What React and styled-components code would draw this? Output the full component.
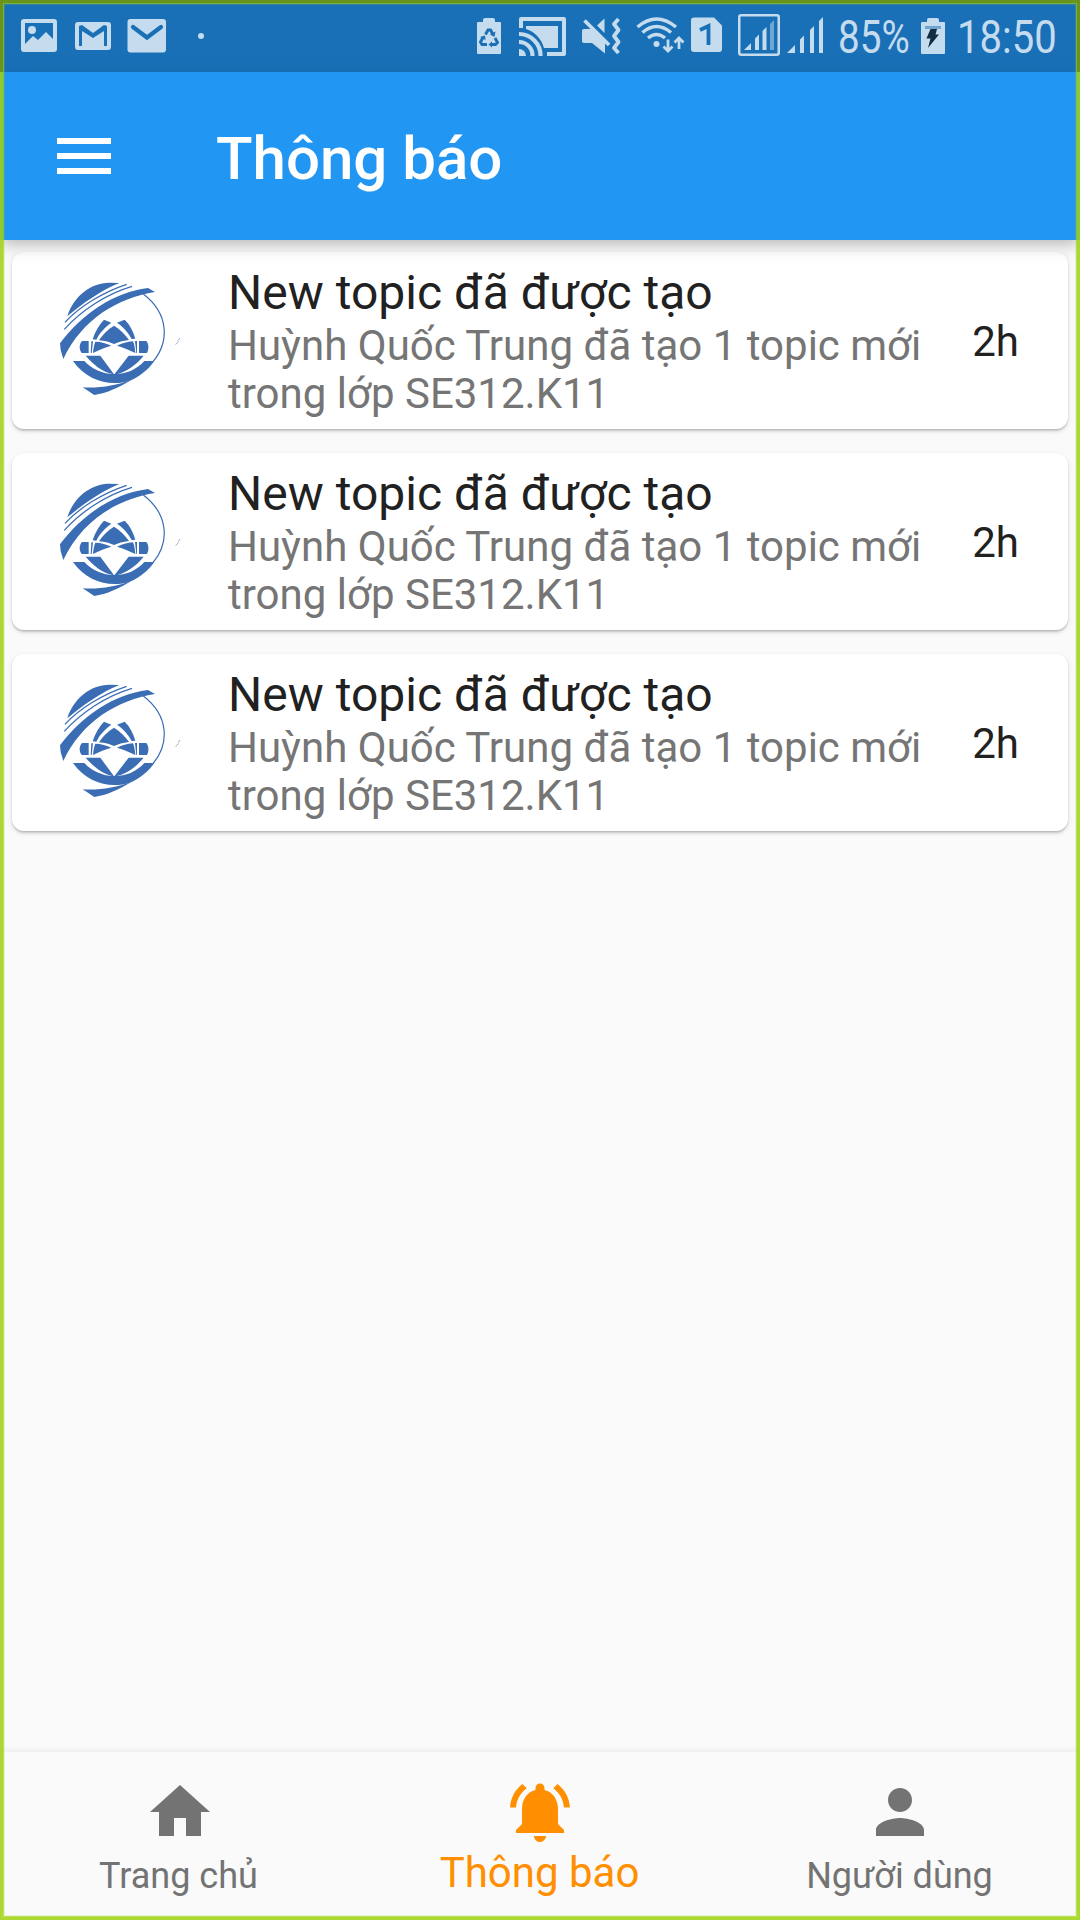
import React from "react";
import styled, { createGlobalStyle } from "styled-components";

const GlobalStyle = createGlobalStyle`
  * { box-sizing: border-box; }
  body { margin: 0; background: #fafafa; }
`;

const Screen = styled.div`
  position: relative;
  width: 1080px;
  height: 1920px;
  display: flex;
  flex-direction: column;
  overflow: hidden;
  background: #fafafa;
  font-family: Roboto, "Noto Sans", sans-serif;
  color: #212121;
`;

const Frame = styled.div`
  position: absolute;
  inset: 0;
  z-index: 5;
  border: 3px solid rgba(160, 210, 20, 0.87);
  box-shadow: inset 0 0 0 1px rgba(160, 210, 20, 0.6), inset 0 0 0 2px rgba(160, 210, 20, 0.2);
  pointer-events: none;
`;

const FrameShade = styled.div`
  position: absolute;
  inset: 0 0 auto 0;
  z-index: 6;
  height: 72px;
  border: 3px solid rgba(0, 0, 0, 0.25);
  border-bottom: 0;
  pointer-events: none;
`;

const StatusBar = styled.div`
  flex: none;
  display: flex;
  align-items: center;
  height: 72px;
  padding-left: 21px;
  background: #1a70b7;
  color: #c5dbee;
`;

const StatusIcon = styled.svg`
  flex: none;
  display: block;
  width: ${(p) => p.$w}px;
  height: 72px;
  margin-left: ${(p) => p.$gap || 0}px;
  fill: currentColor;
`;

const StatusText = styled.span`
  flex: none;
  width: ${(p) => p.$w}px;
  margin-left: ${(p) => p.$gap}px;
  font-size: 46px;
  line-height: 72px;
  white-space: nowrap;
  transform: translateY(1px) scaleX(${(p) => p.$scale});
  transform-origin: 0 50%;
`;

const AppBar = styled.header`
  position: relative;
  z-index: 2;
  flex: none;
  display: flex;
  align-items: center;
  height: 168px;
  padding-left: 48px;
  background: #2196f3;
  color: #fff;
  box-shadow: 0 6px 12px -3px rgba(0, 0, 0, 0.2), 0 12px 15px rgba(0, 0, 0, 0.05),
    0 3px 30px rgba(0, 0, 0, 0.04);
`;

const MenuIcon = styled.svg`
  width: 72px;
  height: 72px;
  fill: currentColor;
`;

const Title = styled.h1`
  margin: 0 0 0 96px;
  padding-top: 5px;
  font-size: 60px;
  font-weight: 500;
  line-height: 70px;
`;

const List = styled.main`
  flex: 1;
  display: flex;
  flex-direction: column;
  gap: 24px;
  padding: 12px;
`;

const Card = styled.article`
  flex: none;
  display: flex;
  align-items: center;
  height: 177px;
  padding: 0 49px 0 40px;
  border-radius: 12px;
  background: #fff;
  box-shadow: 0 3px 3px -1px rgba(0, 0, 0, 0.14), 0 1px 2px rgba(0, 0, 0, 0.13),
    0 2px 6px rgba(0, 0, 0, 0.08);
`;

const Logo = styled.svg`
  flex: none;
  width: 134px;
  height: 123px;
`;

const CardBody = styled.div`
  flex: 1;
  margin-left: 42px;
  padding-top: 2px;
  white-space: nowrap;
`;

const CardTitle = styled.div`
  margin-bottom: 1px;
  font-size: 48px;
  line-height: 56px;
`;

const CardText = styled.div`
  font-size: 42px;
  line-height: 48px;
  color: #757575;
`;

const CardTime = styled.span`
  padding-top: 2px;
  font-size: 42px;
  line-height: 49px;
`;

const NavBar = styled.nav`
  flex: none;
  display: flex;
  height: 168px;
  background: #fafafa;
  box-shadow: 0 -1px 6px rgba(0, 0, 0, 0.07);
`;

const NavItem = styled.div`
  flex: 1;
  display: flex;
  flex-direction: column;
  align-items: center;
  padding-top: 24px;
  color: ${(p) => (p.$active ? "#ff8f00" : "#737373")};
`;

const NavIcon = styled.svg`
  width: 72px;
  height: 72px;
  fill: currentColor;
`;

const NavLabel = styled.span`
  padding-right: ${(p) => p.$nudge || 1}px;
  font-size: ${(p) => (p.$active ? 42 : 36)}px;
  line-height: ${(p) => (p.$active ? 50 : 56)}px;
`;

function UniversityLogo() {
  return (
    <Logo viewBox="-12 9 402 369" fill="#3a6db4">
      <path d="M34 121C52 62 104 20 160 20L190 21C134 44 80 82 34 121Z" />
      <g fill="none" stroke="#3a6db4" strokeWidth="3.800">
        <path d="M27 139C70 92 142 48 212 25" />
        <path d="M25 160C75 104 150 54 228 31" />
      </g>
      <path d="M12 202C78 114 170 50 276 36L297 48C184 66 78 130 22 249L14 222Z" />
      <path d="M262 54C340 114 340 198 291 257" fill="none" stroke="#3a6db4" strokeWidth="3.600" />
      <path d="M51 255C82 300 130 321 176 321C192 321 208 319 222 314C252 301 278 280 295 255H265C240 282 210 294 175 294C140 294 108 280 85 255Z" />
      <path d="M80 334C130 337 180 329 225 312C190 335 152 351 115 357Z" />
      <path d="M89 239H133L174 295C137 288 112 265 89 239ZM218 239H263C240 267 210 290 174 296Z" />
      <path d="M98 195H78C69 205 69 220 77 231H98ZM249 195H271C279 205 279 220 273 231H249Z" />
      <path d="M110 190C117 166 130 146 144 131L166 140C146 154 130 172 121 191ZM238 188C232 166 222 146 206 131L183 140C204 154 218 172 227 189Z" />
      <path d="M129 193C141 175 155 160 174 149C193 160 207 175 219 192C200 194 187 199 174 204C162 199 147 194 129 193Z" />
      <path d="M118 197C136 197 152 202 166 209C146 214 128 222 111 231C112 218 114 207 118 197ZM231 196C214 197 197 202 183 209C202 214 220 222 238 231C237 218 235 206 231 196Z" />
      <path d="M106 196H111L107 231H104ZM237 195H243V231H241Z" />
      <path d="M359 206L368 196M366 194L372 186" fill="none" stroke="#7f98b8" strokeWidth="2.400" />
    </Logo>
  );
}

function LeftStatusIcons() {
  return (
    <>
      <StatusIcon $w={36} viewBox="21 0 36 72">
        <path fillRule="evenodd" d="M24 19H54Q57 19 57 22V49Q57 52 54 52H24Q21 52 21 49V22Q21 19 24 19ZM25 23V44L33 36L38 40L46 32L53 39V23ZM32 26A4 4 0 1 1 32 34A4 4 0 1 1 32 26Z" />
      </StatusIcon>
      <StatusIcon $w={36} $gap={18} viewBox="75 0 36 72">
        <path fillRule="evenodd" d="M78 22H108Q111 22 111 25V47Q111 50 108 50H78Q75 50 75 47V25Q75 22 78 22ZM79 26V46H82V31L93 38L104 31V46H107V26L104 25L93 33L82 25Z" />
      </StatusIcon>
      <StatusIcon $w={39} $gap={16} viewBox="127 0 39 72">
        <rect x="127.5" y="19" width="38.5" height="33.5" rx="3" />
        <path d="M133 27L147 37.500L161 27" fill="none" stroke="#1a70b7" strokeWidth="4.2" strokeLinecap="round" />
      </StatusIcon>
      <StatusIcon $w={6} $gap={31.5} viewBox="197.500 0 6 72">
        <circle cx="200.500" cy="36" r="3" />
      </StatusIcon>
    </>
  );
}

function RightStatusIcons() {
  return (
    <>
      <StatusIcon $w={24} $gap={273.5} viewBox="477 0 24 72">
        <path d="M477 23Q477 22 478 22H483V20Q483 18 485 18H493Q495 18 495 20V22H500Q501 22 501 23V53Q501 54 500 54H478Q477 54 477 53Z" />
        <g fill="none" stroke="#1a70b7" strokeWidth="2.900">
          <path d="M485.500 34.500L488 30H490.500L493 34.500" />
          <path d="M495 38L497.500 42.500L495.500 44.500H490.500" />
          <path d="M487 44.500H482L480.500 42L483 37.500" />
        </g>
        <path fill="#1a70b7" d="M495.500 31.500L494.500 37L490 34.500ZM480 37L485 35.500L485.500 40ZM492 41.500V47.500L488.500 44.500Z" />
      </StatusIcon>
      <StatusIcon $w={47} $gap={18} viewBox="519 0 47 72">
        <path d="M521 28V19H564V54H547" fill="none" stroke="currentColor" strokeWidth="4" strokeLinejoin="round" />
        <path d="M526 26H558V48H544C541 38 535 32 526 29Z" />
        <path d="M519 49A7 7 0 0 1 526 56H519Z" />
        <path d="M519 42A13.500 13.500 0 0 1 532.500 56M519 34A21.500 21.500 0 0 1 540.500 56" fill="none" stroke="currentColor" strokeWidth="4.200" />
      </StatusIcon>
      <StatusIcon $w={39} $gap={16} viewBox="582 0 39 72">
        <path d="M582 31Q582 29 584 29H592L605 42V53.500L592 43H584Q582 43 582 41ZM597 25.500L604.500 18.500V33Z" />
        <path d="M584.500 20.500L609 45" fill="none" stroke="currentColor" strokeWidth="3.800" />
        <path d="M618.500 19L614 24L618.500 30L614 36L618.500 42L614 48L618.500 53" fill="none" stroke="currentColor" strokeWidth="3.800" strokeLinejoin="round" />
      </StatusIcon>
      <StatusIcon $w={49} $gap={15} viewBox="636 0 49 72">
        <g fill="none" stroke="currentColor" strokeWidth="3.400">
          <path d="M637.500 27Q656.500 11 676 27M642.500 32.500Q656.500 20.500 671 32.500M648 38Q656.500 31 665 38" />
          <path d="M668 39.500V51M663.500 46.500L668 51L672.500 46.500M679 49V38M674.500 42.500L679 38L683.500 42.500" strokeWidth="2.800" />
        </g>
        <circle cx="656.500" cy="44" r="3" />
      </StatusIcon>
      <StatusIcon $w={31} $gap={6} viewBox="691 0 31 72">
        <path d="M694 17.500H714L722 25.500V49Q722 52 719 52H694Q691 52 691 49V20.500Q691 17.500 694 17.500Z" />
        <path d="M700 30L708.500 26V45" fill="none" stroke="#1a70b7" strokeWidth="3.800" />
      </StatusIcon>
      <StatusIcon $w={42} $gap={16} viewBox="738 0 42 72">
        <rect x="739.250" y="15.250" width="39.500" height="39.500" rx="2" fill="none" stroke="currentColor" strokeWidth="2.500" />
        <path d="M744 50L751 43V50ZM755 50V38.500L759 34.500V50ZM762.500 50V31L766.500 27V50Z" />
        <path d="M770 50V24L774 20V50Z" opacity="0.5" />
      </StatusIcon>
      <StatusIcon $w={36} $gap={7} viewBox="787 0 36 72">
        <path d="M787 53L795 45V53ZM800 53V39.500L804 35.500V53ZM810 53V30L814 26V53ZM819 53V21L823 17V53Z" />
      </StatusIcon>
      <StatusText $w={76} $gap={14.5} $scale={0.84}>85%</StatusText>
      <StatusIcon $w={24} $gap={7.5} viewBox="921 0 24 72">
        <path d="M921 23Q921 22 922 22H927V20Q927 18 929 18H937Q939 18 939 20V22H944Q945 22 945 23V53Q945 54 944 54H922Q921 54 921 53Z" />
        <path d="M925 26H941V29H925Z" fill="#71a5d0" />
        <path d="M930.500 29H937L935.500 34.500H939L928 48L930.500 38.500H926.500Z" fill="#122c42" />
      </StatusIcon>
      <StatusText $w={120} $gap={12} $scale={0.87}>18:50</StatusText>
    </>
  );
}

const notifications = [1, 2, 3].map((id) => ({
  id,
  title: "New topic đã được tạo",
  lines: ["Huỳnh Quốc Trung đã tạo 1 topic mới", "trong lớp SE312.K11"],
  time: "2h",
}));

const tabs = [
  { label: "Trang chủ", nudge: 3, icon: "M10 20v-6h4v6h5v-8h3L12 3 2 12h3v8z" },
  {
    label: "Thông báo",
    active: true,
    icon: "M7.580 4.080L6.150 2.650C3.750 4.480 2.170 7.300 2.030 10.500h2c.15-2.650 1.510-4.970 3.550-6.420zm12.390 6.420h2c-.15-3.200-1.730-6.020-4.120-7.850l-1.420 1.430c2.020 1.450 3.390 3.770 3.540 6.420zM18 11c0-3.070-1.640-5.640-4.500-6.320V4c0-.83-.67-1.500-1.500-1.500s-1.500.67-1.500 1.500v.68C7.630 5.360 6 7.920 6 11v5l-2 2v1h16v-1l-2-2v-5zm-6 11c.14 0 .27-.01.4-.04.65-.14 1.180-.58 1.440-1.180.1-.24.15-.5.15-.78h-4c.01 1.100.9 2 2.010 2z",
  },
  {
    label: "Người dùng",
    icon: "M12 12c2.210 0 4-1.790 4-4s-1.790-4-4-4-4 1.790-4 4 1.790 4 4 4zm0 2c-2.670 0-8 1.340-8 4v2h16v-2c0-2.660-5.330-4-8-4z",
  },
];

export default function App() {
  return (
    <>
      <GlobalStyle />
      <Screen>
        <StatusBar>
          <LeftStatusIcons />
          <RightStatusIcons />
        </StatusBar>
        <AppBar>
          <MenuIcon viewBox="0 0 24 24">
            <path d="M3 18h18v-2H3v2zm0-5h18v-2H3v2zm0-7v2h18V6H3z" />
          </MenuIcon>
          <Title>Thông báo</Title>
        </AppBar>
        <List>
          {notifications.map((n) => (
            <Card key={n.id}>
              <UniversityLogo />
              <CardBody>
                <CardTitle>{n.title}</CardTitle>
                {n.lines.map((line) => (
                  <CardText key={line}>{line}</CardText>
                ))}
              </CardBody>
              <CardTime>{n.time}</CardTime>
            </Card>
          ))}
        </List>
        <NavBar>
          {tabs.map((t) => (
            <NavItem key={t.label} $active={t.active}>
              <NavIcon viewBox="0 0 24 24">
                <path d={t.icon} />
              </NavIcon>
              <NavLabel $active={t.active} $nudge={t.nudge}>
                {t.label}
              </NavLabel>
            </NavItem>
          ))}
        </NavBar>
        <Frame />
        <FrameShade />
      </Screen>
    </>
  );
}
